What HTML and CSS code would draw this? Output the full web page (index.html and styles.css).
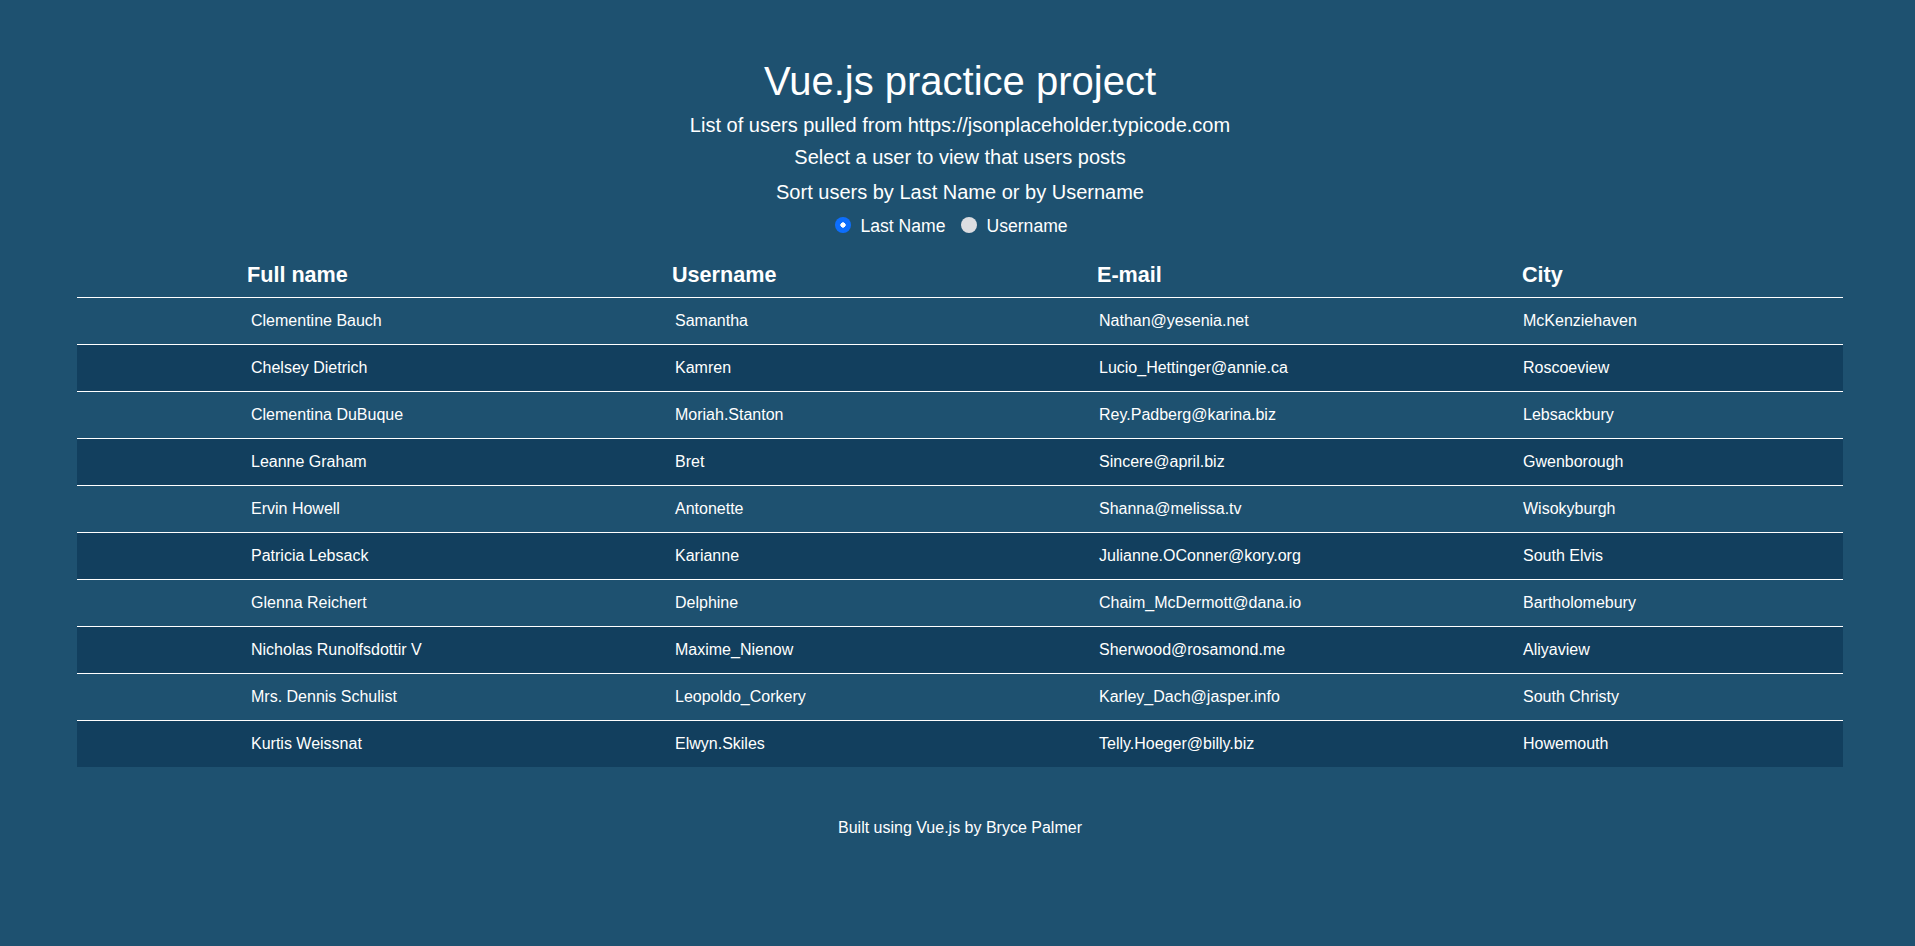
FILE: index.html
```html
<!DOCTYPE html>
<html lang="en">
<head>
<meta charset="utf-8">
<title>Vue.js practice project</title>
<link rel="stylesheet" href="styles.css">
</head>
<body>
<main class="app">
  <h1 class="title">Vue.js practice project</h1>
  <p class="intro intro-source">List of users pulled from https://jsonplaceholder.typicode.com</p>
  <p class="intro intro-select">Select a user to view that users posts</p>
  <p class="intro intro-sort">Sort users by Last Name or by Username</p>
  <div class="sort-options">
    <label class="sort-option"><input class="sort-radio" type="radio" name="sort" checked><span>Last Name</span></label>
    <label class="sort-option"><input class="sort-radio" type="radio" name="sort"><span>Username</span></label>
  </div>

  <div class="user-table">
    <div class="user-head">
      <div>Full name</div><div>Username</div><div>E-mail</div><div>City</div>
    </div>
    <div class="user-row"><div>Clementine Bauch</div><div>Samantha</div><div>Nathan@yesenia.net</div><div>McKenziehaven</div></div>
    <div class="user-row"><div>Chelsey Dietrich</div><div>Kamren</div><div>Lucio_Hettinger@annie.ca</div><div>Roscoeview</div></div>
    <div class="user-row"><div>Clementina DuBuque</div><div>Moriah.Stanton</div><div>Rey.Padberg@karina.biz</div><div>Lebsackbury</div></div>
    <div class="user-row"><div>Leanne Graham</div><div>Bret</div><div>Sincere@april.biz</div><div>Gwenborough</div></div>
    <div class="user-row"><div>Ervin Howell</div><div>Antonette</div><div>Shanna@melissa.tv</div><div>Wisokyburgh</div></div>
    <div class="user-row"><div>Patricia Lebsack</div><div>Karianne</div><div>Julianne.OConner@kory.org</div><div>South Elvis</div></div>
    <div class="user-row"><div>Glenna Reichert</div><div>Delphine</div><div>Chaim_McDermott@dana.io</div><div>Bartholomebury</div></div>
    <div class="user-row"><div>Nicholas Runolfsdottir V</div><div>Maxime_Nienow</div><div>Sherwood@rosamond.me</div><div>Aliyaview</div></div>
    <div class="user-row"><div>Mrs. Dennis Schulist</div><div>Leopoldo_Corkery</div><div>Karley_Dach@jasper.info</div><div>South Christy</div></div>
    <div class="user-row"><div>Kurtis Weissnat</div><div>Elwyn.Skiles</div><div>Telly.Hoeger@billy.biz</div><div>Howemouth</div></div>
  </div>

  <footer class="footer">Built using Vue.js by Bryce Palmer</footer>
</main>
</body>
</html>
```

FILE: styles.css
```css
html {
  background: #1e5170;
}

body {
  margin: 0;
  min-height: 100vh;
  background: #1e5170;
  color: #ffffff;
  font-family: "Liberation Sans", Arial, Helvetica, sans-serif;
}

.app {
  padding-top: 58px;
  padding-left: 5px;
  text-align: center;
}

.title {
  margin: 0;
  font-size: 40px;
  line-height: 46px;
  font-weight: normal;
}

.intro {
  margin: 0;
  font-size: 20px;
  line-height: 23px;
}

.intro-source {
  margin-top: 10px;
}

.intro-select {
  margin-top: 9px;
}

.intro-sort {
  margin-top: 12px;
}

.sort-options {
  margin-top: 12px;
  display: flex;
  justify-content: center;
  gap: 16px;
  padding-right: 17px;
  font-size: 17.6px;
  line-height: 20px;
}

.sort-option {
  display: flex;
  align-items: flex-start;
  gap: 9px;
}

.sort-radio {
  appearance: none;
  -webkit-appearance: none;
  margin: 1px 0 0 0;
  width: 16px;
  height: 16px;
  border-radius: 50%;
  background: #dcdde1;
}

.sort-radio:checked {
  background: radial-gradient(circle, #ffffff 0 2.4px, #0d6efd 2.9px);
}

.user-table {
  margin: 16px 72px 0 72px;
  text-align: left;
}

.user-head {
  display: grid;
  grid-template-columns: 425px 425px 425px 1fr;
  padding: 10px 0 10px 170px;
  font-size: 21.6px;
  line-height: 25px;
  font-weight: bold;
}

.user-row {
  display: grid;
  grid-template-columns: 424px 424px 424px 1fr;
  padding-left: 174px;
  border-top: 1px solid #ffffff;
  font-size: 16px;
  line-height: 46px;
}

.user-row:nth-child(odd) {
  background: #123f5e;
}

.footer {
  margin-top: 52px;
  font-size: 16px;
  line-height: 18px;
}
```
